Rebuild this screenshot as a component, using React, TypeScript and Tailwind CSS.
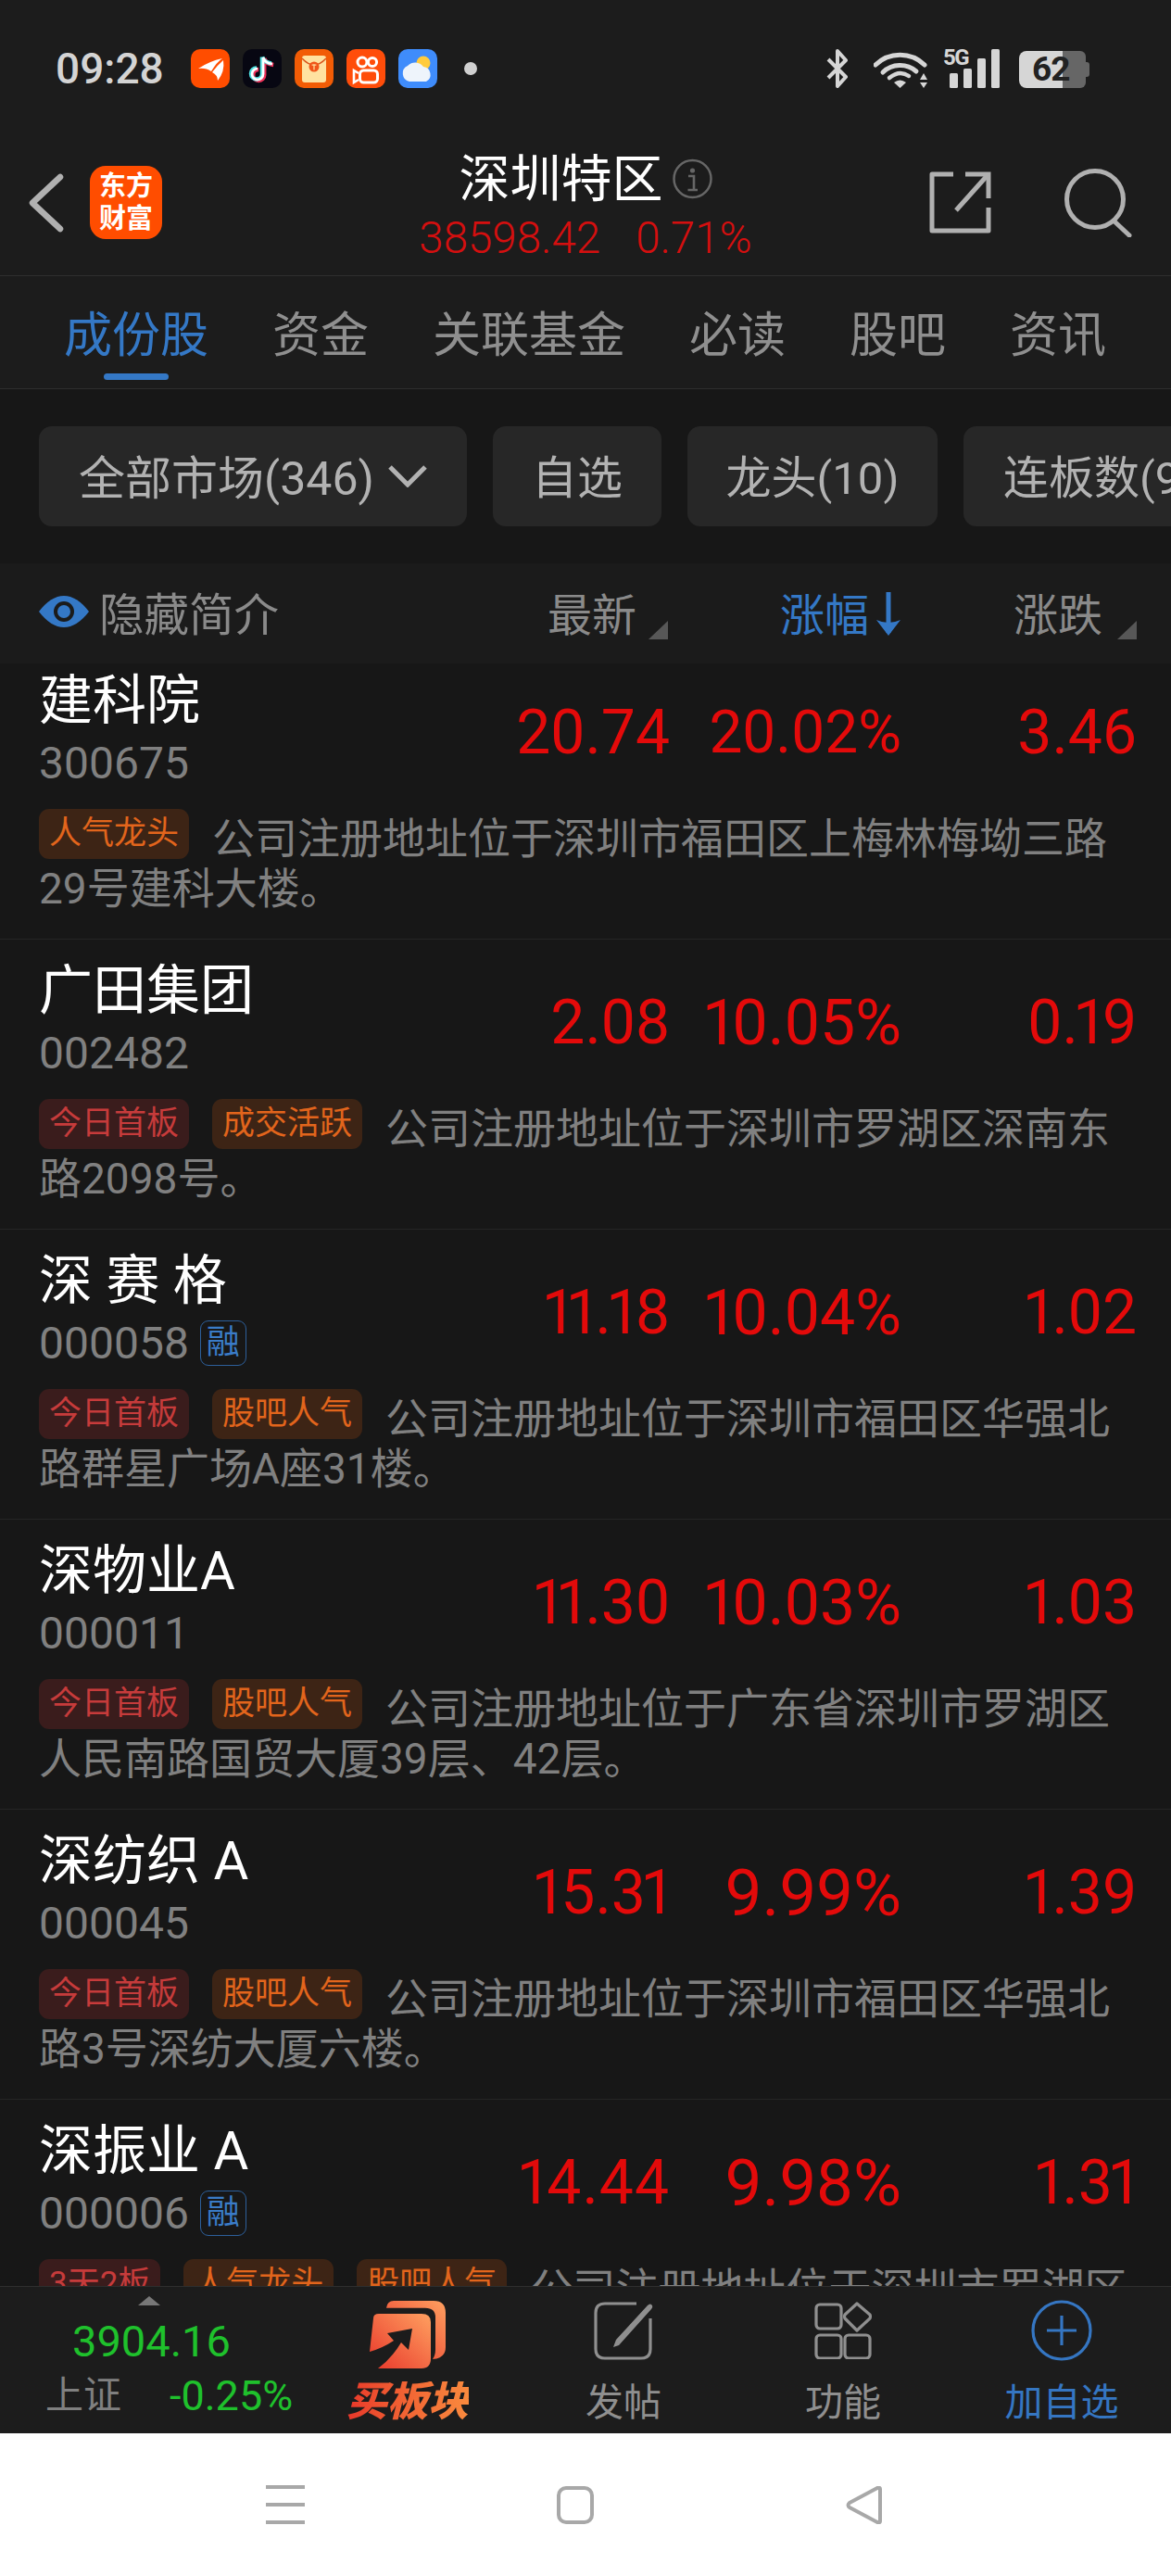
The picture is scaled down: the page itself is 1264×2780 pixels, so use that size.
import React from "react";

const tagStyles: Record<string, string> = {
  red: "bg-[#3a1c1c] text-[#c63b3b]",
  orange: "bg-[#3d2415] text-[#e2651c]",
};

type Row = {
  name: string;
  code: string;
  rong?: boolean;
  price: string;
  priceCls?: string;
  pct: string;
  pctCls: string;
  diff: string;
  tags: [string, string][];
  desc: string;
};

const rows: Row[] = [
  { name: "建科院", code: "300675", price: "20.74", pct: "20.02%", pctCls: "text-[64px]", diff: "3.46", tags: [["人气龙头", "orange"]], desc: "公司注册地址位于深圳市福田区上梅林梅坳三路29号建科大楼。" },
  { name: "广田集团", code: "002482", price: "2.08", pct: "10.05%", pctCls: "text-[68px]", diff: "0.19", tags: [["今日首板", "red"], ["成交活跃", "orange"]], desc: "公司注册地址位于深圳市罗湖区深南东路2098号。" },
  { name: "深 赛 格", code: "000058", rong: true, price: "11.18", pct: "10.04%", pctCls: "text-[68px]", diff: "1.02", tags: [["今日首板", "red"], ["股吧人气", "orange"]], desc: "公司注册地址位于深圳市福田区华强北路群星广场A座31楼。" },
  { name: "深物业A", code: "000011", price: "11.30", pct: "10.03%", pctCls: "text-[68px]", diff: "1.03", tags: [["今日首板", "red"], ["股吧人气", "orange"]], desc: "公司注册地址位于广东省深圳市罗湖区人民南路国贸大厦39层、42层。" },
  { name: "深纺织 A", code: "000045", price: "15.31", pct: "9.99%", pctCls: "text-[71px]", diff: "1.39", tags: [["今日首板", "red"], ["股吧人气", "orange"]], desc: "公司注册地址位于深圳市福田区华强北路3号深纺大厦六楼。" },
  { name: "深振业 A", code: "000006", rong: true, price: "14.44", priceCls: "tracking-[1px]", pct: "9.98%", pctCls: "text-[71px]", diff: "1.31", tags: [["3天2板", "red"], ["人气龙头", "orange"], ["股吧人气", "orange"]], desc: "公司注册地址位于深圳市罗湖区" },
];

// The reference's numeral "1" is much narrower than the other digits.
function Num({ value }: { value: string }) {
  return (
    <>
      {value.split("").map((c, i) =>
        c === "1" ? (
          <span key={i} className="-mx-[5.5px]">1</span>
        ) : (
          <React.Fragment key={i}>{c}</React.Fragment>
        )
      )}
    </>
  );
}

function AppIcons() {
  return (
    <div className="flex items-center gap-[14px] ml-[29px]">
      <svg width="42" height="42" viewBox="0 0 42 42">
        <rect width="42" height="42" rx="10" fill="#ff4d00" />
        <path d="M8 21 Q20 13 34 10 Q28 14 22 24 Q16 20 8 21Z" fill="#fff" />
        <path d="M23 25 Q28 18 35 12 Q37 24 29 34 Q29 28 23 25Z" fill="#fff" />
      </svg>
      <svg width="42" height="42" viewBox="0 0 42 42">
        <rect width="42" height="42" rx="10" fill="#070712" />
        <path d="M22 9 V27 A6 6 0 1 1 16 21 M22 9 Q24 15 32 16" fill="none" stroke="#f0325a" strokeWidth="4.5" transform="translate(1.2 1)" />
        <path d="M22 9 V27 A6 6 0 1 1 16 21 M22 9 Q24 15 32 16" fill="none" stroke="#4fe0e0" strokeWidth="4.5" transform="translate(-1 -0.6)" />
        <path d="M22 9 V27 A6 6 0 1 1 16 21 M22 9 Q24 15 32 16" fill="none" stroke="#fff" strokeWidth="2.6" />
      </svg>
      <svg width="42" height="42" viewBox="0 0 42 42">
        <rect width="42" height="42" rx="10" fill="#f25c05" />
        <rect x="8" y="7" width="26" height="29" rx="3" fill="#ffe2a0" />
        <path d="M8 10 Q21 24 34 10" fill="none" stroke="#d9541a" strokeWidth="1.5" />
        <circle cx="21" cy="19" r="5.5" fill="#f0561a" />
        <rect x="18.6" y="16.5" width="4.8" height="1.2" fill="#ffe2a0" />
        <rect x="20.4" y="16.5" width="1.2" height="6" fill="#ffe2a0" />
      </svg>
      <svg width="42" height="42" viewBox="0 0 42 42">
        <rect width="42" height="42" rx="10" fill="#ff4d0a" />
        <circle cx="17" cy="14" r="5" fill="none" stroke="#fff" strokeWidth="3" />
        <circle cx="28" cy="14" r="4.6" fill="none" stroke="#fff" strokeWidth="3" />
        <rect x="14.5" y="23" width="19" height="13" rx="4" fill="none" stroke="#fff" strokeWidth="3" />
        <path d="M13 26 L8 23 V36 L13 33" fill="none" stroke="#fff" strokeWidth="2.6" />
      </svg>
      <svg width="42" height="42" viewBox="0 0 42 42">
        <rect width="42" height="42" rx="10" fill="#3f8cfb" />
        <circle cx="27" cy="15" r="7.5" fill="#ffcb3d" />
        <path d="M12 35 A9 9 0 0 1 10 18 A11 11 0 0 1 27 19 A8.5 8.5 0 0 1 30 35Z" fill="#eef4fb" />
      </svg>
      <span className="ml-[15px] w-[14px] h-[14px] rounded-full bg-[#d0d0d0]" />
    </div>
  );
}

function StatusRight() {
  return (
    <div className="flex items-center mr-[88px]">
      <svg width="24" height="42" viewBox="0 0 24 42" fill="none" stroke="#d6d6d6" strokeWidth="4" strokeLinejoin="round">
        <path d="M2 11 L21 30 L12 40 V2 L21 12 L2 31" />
      </svg>
      <svg className="ml-[27px]" width="59" height="42" viewBox="0 0 59 42" fill="none" stroke="#d6d6d6" strokeWidth="5" strokeLinecap="round">
        <path d="M2 17 A38 38 0 0 1 55 17" />
        <path d="M10 25 A27 27 0 0 1 46 24" />
        <path d="M17 31 Q28 22 38 29" strokeWidth="4.5" />
        <path d="M22 36 Q28.5 31 35 36 L28.5 42Z" fill="#d6d6d6" stroke="none" />
        <path d="M50 33 L54 26 L58 33Z M50 36 H58 L54 42Z" fill="#d6d6d6" stroke="none" />
      </svg>
      <div className="relative w-[61px] h-[42px] ml-[16px]">
        <span className="absolute left-0 top-[-3px] text-[24px] leading-[24px] font-bold tracking-[-1.5px] text-[#d6d6d6]">5G</span>
        <svg className="absolute left-[7px] top-0" width="54" height="42" viewBox="0 0 54 42" fill="#d6d6d6">
          <rect x="0" y="26" width="9" height="16" rx="1.5" />
          <rect x="15" y="21" width="9" height="21" rx="1.5" />
          <rect x="30" y="10" width="9" height="32" rx="1.5" />
          <rect x="45" y="0" width="9" height="42" rx="1.5" />
        </svg>
      </div>
      <div className="relative flex items-center w-[76px] h-[40px] ml-[21px] mt-[2px]">
        <div className="w-[47px] h-[40px] bg-[#d6d6d6] rounded-l-[8px]" />
        <div className="w-[25px] h-[40px] bg-[#666666] rounded-r-[6px]" />
        <div className="w-[4px] h-[16px] bg-[#666666] rounded-r-[3px]" />
        <span className="absolute left-[14px] top-[-1px] text-[37px] leading-[42px] font-bold tracking-[-1px] text-[#222222]">62</span>
      </div>
    </div>
  );
}

function Header() {
  return (
    <div className="grid grid-cols-[1fr_auto_1fr] items-center h-[158px] border-b border-[#2e2e2e]">
      <div className="flex items-center pl-[31px]">
        <svg width="38" height="64" viewBox="0 0 38 64" fill="none" stroke="#b0b0b0" strokeWidth="6.5" strokeLinecap="round" strokeLinejoin="round">
          <path d="M34 4 L4 32 L34 60" />
        </svg>
        <div className="ml-[28px] w-[78px] h-[79px] rounded-[17px] bg-[#ff4d00] flex flex-col items-center justify-center text-white font-bold text-[29px] leading-[35px]">
          <span>东方</span>
          <span>财富</span>
        </div>
      </div>
      <div className="flex flex-col items-center">
        <div className="flex items-center">
          <span className="text-[55px] leading-[66px] text-white">深圳特区</span>
          <svg className="ml-[10px]" width="43" height="44" viewBox="0 0 43 44" fill="none">
            <circle cx="21.5" cy="22" r="20" stroke="#666" strokeWidth="2.5" />
            <circle cx="21.5" cy="13" r="2.6" fill="#666" />
            <path d="M17 19 H23 V33 M16.5 34 H27" stroke="#666" strokeWidth="2.6" />
          </svg>
        </div>
        <div className="flex gap-[38px] text-[47.5px] leading-[50px] text-[#d40f0f] font-light mt-[6px] -mb-[4px]">
          <span>38598.42</span>
          <span>0.71%</span>
        </div>
      </div>
      <div className="flex items-center justify-end pr-[42px] gap-[79px]">
        <svg width="67" height="67" viewBox="0 0 67 67" fill="none" stroke="#b0b0b0" strokeWidth="5">
          <path d="M26 3 H3 V64 H64 V39" strokeLinejoin="round" />
          <path d="M64 29 V3 H39" />
          <path d="M63 4 L29 42" />
        </svg>
        <svg width="73" height="74" viewBox="0 0 73 74" fill="none" stroke="#b0b0b0" strokeWidth="5" strokeLinecap="round">
          <circle cx="33" cy="33" r="30.5" />
          <path d="M54 57 L70 72" />
        </svg>
      </div>
    </div>
  );
}

function Tabs() {
  const items = ["资金", "关联基金", "必读", "股吧", "资讯"];
  return (
    <div className="flex h-[122px] border-b border-[#2e2e2e] pl-[69px] gap-[69px] text-[52px] leading-[70px] pt-[30px] whitespace-nowrap">
      <div className="flex flex-col items-center">
        <span className="text-[#3478c6]">成份股</span>
        <span className="w-[70px] h-[7px] rounded-full bg-[#3478c6] mt-[5px]" />
      </div>
      {items.map((t) => (
        <span key={t} className="text-[#8f8f8f]">{t}</span>
      ))}
    </div>
  );
}

function Filters() {
  const chip = "flex shrink-0 items-center justify-center h-[108px] pt-[6px] rounded-[14px] bg-[#272727] text-[49px] text-[#b2b2b2]";
  return (
    <div className="flex items-center gap-[28px] h-[188px] bg-[#171717] pl-[42px] overflow-hidden whitespace-nowrap">
      <div className={`${chip} w-[462px]`}>
        <span className="text-[50px]">全部市场(346)</span>
        <svg className="ml-[15px] -mt-[6px]" width="42" height="24" viewBox="0 0 42 24" fill="none" stroke="#b2b2b2" strokeWidth="5">
          <path d="M2 2 L21 21 L40 2" />
        </svg>
      </div>
      <div className={`${chip} w-[182px]`}>自选</div>
      <div className={`${chip} w-[270px]`}>龙头(10)</div>
      <div className={`${chip} w-[300px] justify-start pl-[43px]`}>连板数(9)</div>
    </div>
  );
}

function SortTriangle() {
  return (
    <svg className="ml-[16px] mt-[30px] shrink-0" width="21" height="20" viewBox="0 0 21 20">
      <path d="M21 0 V20 H0Z" fill="#575757" />
    </svg>
  );
}

function ColumnHeader() {
  return (
    <div className="flex items-center h-[108px] pt-[6px] bg-[#1b1b1b] pl-[42px] pr-[37px] text-[48px] text-[#8a8a8a] relative z-10">
      <div className="flex-1 flex items-center">
        <svg className="-mt-[10px]" width="54" height="34" viewBox="0 0 54 34">
          <path d="M0 17 Q13 0 27 0 Q41 0 54 17 Q41 34 27 34 Q13 34 0 17Z" fill="#3478c6" />
          <circle cx="27" cy="17" r="11" fill="#1b1b1b" />
          <circle cx="27" cy="17" r="7" fill="#3478c6" />
        </svg>
        <span className="ml-[11px] text-[48.5px]">隐藏简介</span>
      </div>
      <div className="flex items-center">
        <span className="-mr-[3px]">最新</span>
        <SortTriangle />
      </div>
      <div className="w-[252px] flex items-center justify-end text-[#3478c6]">
        <span>涨幅</span>
        <svg className="ml-[7px] -mt-[4px]" width="28" height="48" viewBox="0 0 28 48" fill="none" stroke="#3478c6" strokeWidth="5">
          <path d="M14 0 V44" />
          <path d="M14 47 L1 30 Q14 36 27 30Z" fill="#3478c6" stroke="none" />
        </svg>
      </div>
      <div className="w-[254px] flex items-center justify-end">
        <span>涨跌</span>
        <SortTriangle />
      </div>
    </div>
  );
}

function StockRow({ r }: { r: Row }) {
  return (
    <div className="h-[313px] shrink-0 bg-[#171717] border-b border-[#252525] pt-[19px] px-[42px]">
      <div className="flex items-center h-[138px]">
        <div className="flex-1 min-w-0">
          <div className="text-[58px] leading-[70px] text-white whitespace-nowrap">{r.name}</div>
          <div className="flex items-center h-[66px]">
            <span className="text-[48px] leading-[66px] text-[#808080]">{r.code}</span>
            {r.rong && (
              <span className="ml-[12px] w-[50px] h-[49px] -mt-[2px] flex items-center justify-center rounded-[9px] border-[1.5px] border-[#2d5f9a] text-[36px] text-[#3a7cc8]">融</span>
            )}
          </div>
        </div>
        <div className="flex items-center leading-[70px] text-[#e30a0a] -mr-[5px] mt-[4px]">
          <span className={`text-[66px] ${r.priceCls ?? ""}`}><Num value={r.price} /></span>
          <span className={`w-[250px] text-right ${r.pctCls}`}><Num value={r.pct} /></span>
          <span className="w-[254px] text-right text-[66px]"><Num value={r.diff} /></span>
        </div>
      </div>
      <div className="mt-[20px] text-[46px] leading-[54px] text-[#808080]">
        {r.tags.map(([t, c]) => (
          <span
            key={t}
            className={`inline-flex items-center justify-center align-top h-[54px] -mt-[5px] mr-[25px] px-[11px] rounded-[11px] text-[35px] leading-[54px] ${tagStyles[c]}`}
          >
            {t}
          </span>
        ))}
        {r.desc}
      </div>
    </div>
  );
}

function BuyIcon() {
  return (
    <svg width="82" height="76" viewBox="0 0 82 76">
      <defs>
        <linearGradient id="buyg" x1="0" y1="1" x2="1" y2="0">
          <stop offset="0" stopColor="#e8362a" />
          <stop offset="1" stopColor="#ffa060" />
        </linearGradient>
      </defs>
      <path d="M18 8.7 Q19 1 26 1 H69 Q82 1 82 14 V51 Q82 63 68 64 Q71 60 71 54 V19 Q71 8.7 60 8.7Z" fill="url(#buyg)" />
      <path d="M4 20 Q4 15 10 15 H56 Q66 15 66 24 V63 Q66 74 56 74 H9 Q24 63 34 46 L42 54 L46 31 L19 36 L26 44 Q14 52 0 56Z" fill="url(#buyg)" />
    </svg>
  );
}

function NavItem({ label, color, width, children }: { label: string; color: string; width: string; children: React.ReactNode }) {
  return (
    <div className={`flex flex-col items-center pt-[14px] ${width}`}>
      <div className="h-[66px] flex items-center justify-center">{children}</div>
      <span className={`mt-[20px] text-[41px] leading-[50px] ${color}`}>{label}</span>
    </div>
  );
}

function Footer() {
  return (
    <div className="flex h-[159px] shrink-0 bg-[#1c1c1c] border-t border-[#2e2e2e] relative z-10">
      <div className="w-[320px] pl-[49px] pt-[10px]">
        <svg className="ml-[100px]" width="24" height="10" viewBox="0 0 24 10"><path d="M12 0 L24 10 H0Z" fill="#777" /></svg>
        <div className="ml-[29px] mt-[14px] text-[47px] leading-[50px] text-[#1fc12c]">3904.16</div>
        <div className="flex items-center mt-[9px] h-[50px]">
          <span className="text-[41px] text-[#808080]">上证</span>
          <span className="ml-[52px] text-[45px] text-[#1fc12c]">-0.25%</span>
        </div>
      </div>
      <div className="w-[240px] flex flex-col items-center pt-[14px]">
        <BuyIcon />
        <span className="mt-[12px] text-[44px] leading-[44px] font-black italic bg-linear-to-r from-[#e8362a] to-[#f98a3e] bg-clip-text text-transparent">买板块</span>
      </div>
      <NavItem label="发帖" color="text-[#8f8f8f]" width="w-[226px]">
        <svg width="64" height="63" viewBox="0 0 64 63" fill="none" stroke="#8f8f8f" strokeWidth="3.2">
          <path d="M46 2 H12 Q2 2 2 12 V51 Q2 61 12 61 H51 Q61 61 61 51 V18" />
          <path d="M24 41 L58 4 Q61 1 63 4 Q64 6 62 8 L27 47 L21 49Z" fill="#8f8f8f" stroke="none" />
        </svg>
      </NavItem>
      <NavItem label="功能" color="text-[#8f8f8f]" width="w-[248px]">
        <svg width="62" height="62" viewBox="0 0 62 62" fill="none" stroke="#8f8f8f" strokeWidth="3.2">
          <rect x="2" y="3" width="27" height="26" rx="4" />
          <rect x="2" y="36" width="27" height="25" rx="4" />
          <rect x="33" y="36" width="27" height="25" rx="4" />
          <path d="M46 2 L60 14 Q61 16 60 18 L46 31 L33 18 Q32 16 33 14Z" strokeLinejoin="round" />
        </svg>
      </NavItem>
      <NavItem label="加自选" color="text-[#3576c2]" width="w-[224px]">
        <svg width="66" height="66" viewBox="0 0 66 66" fill="none" stroke="#3576c2" strokeWidth="3.2">
          <circle cx="33" cy="33" r="31" />
          <path d="M17 33 H49 M33 17 V49" />
        </svg>
      </NavItem>
    </div>
  );
}

function SystemNav() {
  return (
    <div className="flex items-center h-[154px] shrink-0 bg-white pl-[287px] gap-[272px]">
      <div className="flex flex-col gap-[15px] w-[42px]">
        <span className="h-[4px] bg-[#a8a8a8]" />
        <span className="h-[4px] bg-[#a8a8a8]" />
        <span className="h-[4px] bg-[#a8a8a8]" />
      </div>
      <span className="w-[40px] h-[41px] rounded-[10px] border-[4px] border-[#a8a8a8]" />
      <svg width="40" height="41" viewBox="0 0 40 41" fill="none" stroke="#a8a8a8" strokeWidth="4" strokeLinejoin="round">
        <path d="M37 3 V38 Q37 40 34 39 L4 23 Q1 20.5 4 18 L34 2 Q37 1 37 3Z" />
      </svg>
    </div>
  );
}

export default function App() {
  return (
    <div className="w-[1264px] h-[2780px] flex flex-col overflow-hidden bg-[#1c1c1c] [font-family:Roboto,'Noto_Sans_CJK_SC',sans-serif]">
      <div className="flex items-start justify-between h-[140px] pt-[53px] shrink-0">
        <div className="flex items-center h-[42px] pl-[60px]">
          <span className="text-[46px] leading-[42px] font-medium text-[#d4d4d4]">09:28</span>
          <AppIcons />
        </div>
        <StatusRight />
      </div>
      <Header />
      <Tabs />
      <Filters />
      <ColumnHeader />
      <div className="flex-1 min-h-0 overflow-hidden bg-[#171717]">
        <div className="-mt-[15px]">
          {rows.map((r) => (
            <StockRow key={r.code} r={r} />
          ))}
        </div>
      </div>
      <Footer />
      <SystemNav />
    </div>
  );
}
